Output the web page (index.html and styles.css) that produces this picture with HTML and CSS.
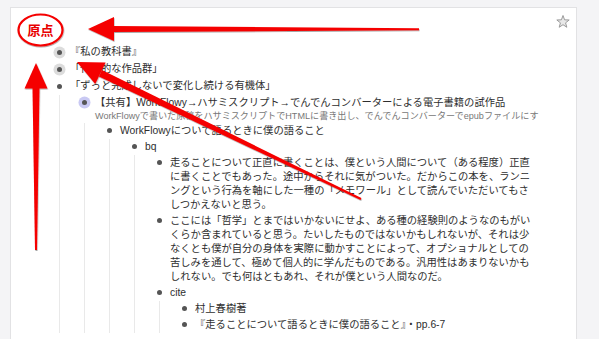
FILE: index.html
```html
<!DOCTYPE html>
<html lang="ja">
<head>
<meta charset="utf-8">
<link rel="stylesheet" href="styles.css">
</head>
<body>
<div class="panel">
  <div class="panel-head">
    <svg class="star" width="14" height="13" viewBox="0 0 14 13"><polygon points="7,0.5 8.59,4.82 13.18,4.99 9.57,7.83 10.82,12.26 7,9.7 3.18,12.26 4.43,7.83 0.82,4.99 5.41,4.82" fill="#e8e8e8" stroke="#9a9a9a" stroke-width="1" stroke-linejoin="round"/></svg>
  </div>
  <ul class="tree">
    <li class="l1"><div class="row"><span class="bullet halo"><i></i></span><span class="text">『私の教科書』</span></div></li>
    <li class="l1"><div class="row"><span class="bullet halo"><i></i></span><span class="text">「代表的な作品群」</span></div></li>
    <li class="l1"><div class="row"><span class="bullet"><i></i></span><span class="text">「ずっと完成しないで変化し続ける有機体」</span></div>
      <ul class="kids">
        <li><div class="row"><span class="bullet shared"><i></i></span><div class="text">【共有】WorkFlowy→ハサミスクリプト→でんでんコンバーターによる電子書籍の試作品<div class="note">WorkFlowyで書いた原稿をハサミスクリプトでHTMLに書き出し、でんでんコンバーターでepubファイルにす</div></div></div>
          <ul class="kids">
            <li><div class="row"><span class="bullet"><i></i></span><span class="text">WorkFlowyについて語るときに僕の語ること</span></div>
              <ul class="kids">
                <li><div class="row"><span class="bullet"><i></i></span><span class="text">bq</span></div>
                  <ul class="kids">
                    <li><div class="row"><span class="bullet"><i></i></span><span class="text">走ることについて正直に書くことは、僕という人間について（ある程度）正直に書くことでもあった。途中からそれに気がついた。だからこの本を、ランニングという行為を軸にした一種の「メモワール」として読んでいただいてもさしつかえないと思う。</span></div></li>
                    <li><div class="row"><span class="bullet"><i></i></span><span class="text">ここには「哲学」とまではいかないにせよ、ある種の経験則のようなのもがいくらか含まれていると思う。たいしたものではないかもしれないが、それは少なくとも僕が自分の身体を実際に動かすことによって、オプショナルとしての苦しみを通して、極めて個人的に学んだものである。汎用性はあまりないかもしれない。でも何はともあれ、それが僕という人間なのだ。</span></div></li>
                    <li><div class="row"><span class="bullet"><i></i></span><span class="text">cite</span></div>
                      <ul class="kids">
                        <li><div class="row"><span class="bullet"><i></i></span><span class="text">村上春樹著</span></div></li>
                        <li><div class="row"><span class="bullet"><i></i></span><span class="text">『走ることについて語るときに僕の語ること』・pp.6-7</span></div></li>
                      </ul>
                    </li>
                  </ul>
                </li>
              </ul>
            </li>
          </ul>
        </li>
      </ul>
    </li>
  </ul>
</div>
<svg class="marks" width="599" height="339" viewBox="0 0 599 339">
  <defs>
    <filter id="sh" x="-10%" y="-10%" width="120%" height="120%">
      <feDropShadow dx="0.5" dy="1" stdDeviation="0.7" flood-color="#000" flood-opacity="0.35"/>
    </filter>
  </defs>
  <g filter="url(#sh)" fill="#f50000">
    <polygon points="112,26 419,28.3 419,30.3 112,32"/>
    <polygon points="88,29 114,17 114,41"/>
    <polygon points="32.5,87 39.5,87 37,250 35,250"/>
    <polygon points="36,63 24.5,88.5 47.5,88.5"/>
    <polygon points="101.9,70.1 361.4,198.1 360.6,199.9 98.9,76.5"/>
    <polygon points="77,62 105.6,62.5 95.2,84.1"/>
    <ellipse cx="40.5" cy="30" rx="22" ry="15.5" fill="#fff" stroke="#f50000" stroke-width="2.2"/>
  </g>
  <text class="origin" x="40.5" y="35">原点</text>
</svg>
</body>
</html>
```

FILE: styles.css
```css
* { box-sizing: border-box; }
html, body { margin: 0; padding: 0; }
body {
  width: 599px;
  height: 339px;
  overflow: hidden;
  position: relative;
  background: #f4f4f6;
  color: #2e2e2e;
  font-family: "Liberation Sans", "Noto Sans CJK JP", sans-serif;
}
.panel {
  margin: 7px 0 0 10px;
  width: 567px;
  height: 340px;
  background: #fff;
  border: 1px solid #e2e2e4;
  padding: 0 43px 0 42px;
}
.panel-head {
  display: flex;
  justify-content: flex-end;
  height: 20px;
  padding-top: 7px;
  margin-right: -37px;
}
.star { display: block; }
ul { list-style: none; margin: 0; padding: 0; }
.tree { margin-top: 15.5px; }
.kids {
  margin-left: 6px;
  border-left: 1px solid #e9e9e9;
  padding-left: 18px;
}
.row {
  display: flex;
  align-items: flex-start;
  padding: 1px 0;
  font-size: 10.3px;
  line-height: 14px;
}
.l1 > .row { padding: 1.5px 0; }
.bullet {
  flex: none;
  width: 12px;
  height: 14px;
  display: flex;
  align-items: center;
  justify-content: center;
}
.bullet i {
  display: block;
  width: 5px;
  height: 5px;
  border-radius: 50%;
  background: #555;
}
.bullet.halo i { box-shadow: 0 0 0 3.5px #dcdcdc; }
.bullet.shared i { box-shadow: 0 0 0 3.5px #c9c9f3; }
.text { margin-left: 5px; min-width: 0; flex: 1; }
.note {
  font-size: 9.1px;
  line-height: 12px;
  color: #777;
  white-space: nowrap;
}
.marks {
  position: absolute;
  left: 0;
  top: 0;
  pointer-events: none;
}
.origin {
  font-family: "Noto Sans CJK JP", sans-serif;
  font-size: 13px;
  font-weight: 700;
  fill: #e80000;
  stroke: #fff;
  stroke-width: 2px;
  paint-order: stroke;
  text-anchor: middle;
}
```
